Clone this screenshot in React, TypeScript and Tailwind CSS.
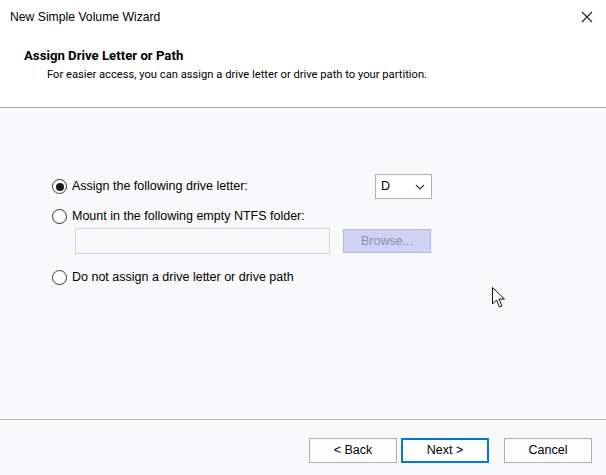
import React from "react";

function Radio({ checked }: { checked?: boolean }) {
  return (
    <span className="w-[15px] h-[15px] rounded-full border border-[#333333] bg-white flex items-center justify-center shrink-0">
      {checked && <span className="w-[8px] h-[8px] rounded-full bg-[#1a1a1a]" />}
    </span>
  );
}

function Btn({ label, primary }: { label: string; primary?: boolean }) {
  return (
    <div
      className={
        "w-[88px] h-[25px] flex items-center justify-center bg-[#fdfdfd] text-[12.5px] text-black " +
        (primary ? "border-2 border-[#0078d7]" : "border border-[#adadad]")
      }
    >
      {label}
    </div>
  );
}

export default function App() {
  return (
    <div
      className="relative w-[606px] h-[475px] flex flex-col bg-white text-black overflow-hidden"
      style={{ fontFamily: '"Liberation Sans", Arial, sans-serif' }}
    >
      {/* Header */}
      <div className="h-[107px] bg-white flex flex-col shrink-0">
        <div className="h-[34px] flex items-center justify-between pl-[10px] pr-[13px]">
          <span className="text-[12.2px] leading-none">New Simple Volume Wizard</span>
          <svg width="12" height="12" viewBox="0 0 12 12">
            <path d="M1 1 L11 11 M11 1 L1 11" stroke="#222" strokeWidth="1.1" />
          </svg>
        </div>
        <div className="pl-[24px] pt-[15px] text-[13.2px] font-bold leading-none font-['Roboto',sans-serif]">
          Assign Drive Letter or Path
        </div>
        <div className="pl-[47px] pt-[7px] text-[11.2px] leading-none font-['Roboto',sans-serif]">
          For easier access, you can assign a drive letter or drive path to your partition.
        </div>
      </div>
      <div className="h-[1px] bg-[#a0a0a0] shrink-0" />
      <div className="h-[1px] bg-white shrink-0" />

      {/* Body */}
      <div className="flex-1 bg-[#f9f9fb] flex flex-col">
        <div className="flex-1 pt-[65px] pl-[52px]">
          <div className="w-[380px] h-[25px] flex items-center">
            <Radio checked />
            <span className="ml-[5px] text-[12.5px]">Assign the following drive letter:</span>
            <div className="ml-auto w-[57px] h-[25px] bg-white border border-[#adadad] flex items-center justify-between pl-[5px] pr-[6px]">
              <span className="text-[12.5px]">D</span>
              <svg width="10" height="6" viewBox="0 0 10 6">
                <path d="M1 1 L5 5 L9 1" stroke="#333" strokeWidth="1.2" fill="none" />
              </svg>
            </div>
          </div>
          <div className="mt-[9px] h-[16px] flex items-center">
            <Radio />
            <span className="ml-[5px] text-[12.5px]">Mount in the following empty NTFS folder:</span>
          </div>
          <div className="mt-[4px] ml-[23px] flex items-center gap-[13px]">
            <div className="w-[255px] h-[26px] bg-[#f9f9fb] border border-[#cdd0ef]" />
            <div className="w-[88px] h-[24px] bg-[#d0d1f6] border border-[#b6b8e0] flex items-center justify-center text-[12.5px] text-[#8e90a8]">
              Browse...
            </div>
          </div>
          <div className="mt-[15px] h-[16px] flex items-center">
            <Radio />
            <span className="ml-[5px] text-[12.5px]">Do not assign a drive letter or drive path</span>
          </div>
        </div>
        <div className="h-[1px] bg-[#b8b8b0] shrink-0" />
        <div className="h-[1px] bg-white shrink-0" />
        <div className="h-[54px] flex items-start pt-[17px] pl-[309px]">
          <Btn label="< Back" />
          <div className="ml-[4px]">
            <Btn label="Next >" primary />
          </div>
          <div className="ml-[15px]">
            <Btn label="Cancel" />
          </div>
        </div>
      </div>

      {/* Mouse cursor */}
      <svg className="absolute left-[492px] top-[287px]" width="14" height="22" viewBox="0 0 14 22">
        <path
          d="M0.5 0.5 L0.5 17 L4.5 13 L7.5 20 L10 19 L7 12 L12.5 12 Z"
          fill="white"
          stroke="#111"
          strokeWidth="1"
          strokeLinejoin="round"
        />
      </svg>
    </div>
  );
}
